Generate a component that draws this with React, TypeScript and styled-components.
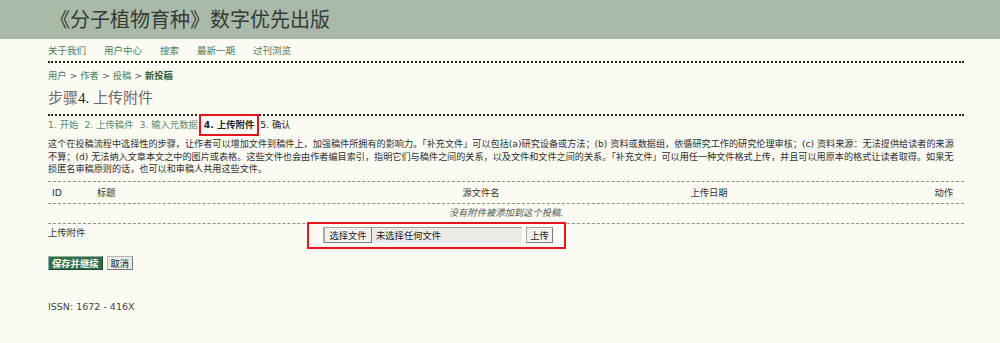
import React from 'react'
import styled, { createGlobalStyle } from 'styled-components'

const GlobalStyle = createGlobalStyle`
  body {
    margin: 0;
    background: #fbfbf4;
    color: #333;
    font-family: 'DejaVu Sans', 'Noto Sans CJK SC', sans-serif;
  }
`

const Header = styled.header`
  height: 39px;
  background: #aabaa8;
  display: flex;
  align-items: center;
  padding-left: 50px;
`

const Title = styled.h1`
  margin: 0;
  font: 400 20px/1 'Liberation Serif', 'Noto Sans CJK SC', serif;
  color: #363a36;
`

const Main = styled.main`
  width: 916px;
  margin-left: 48px;
`

const Nav = styled.nav`
  display: flex;
  gap: 18px;
  padding: 6px 0 4px;
  border-bottom: 2px dotted #222;
  font-size: 9.5px;
  line-height: 12px;
`

const GreenLink = styled.a<{ $strong?: boolean }>`
  color: ${(p) => (p.$strong ? '#2f5e40' : '#4b7d5b')};
  font-weight: ${(p) => (p.$strong ? 700 : 400)};
  text-decoration: none;
`

const Crumbs = styled.div`
  margin-top: 7px;
  font-size: 9.3px;
  line-height: 12px;
  color: #555;
`

const Heading = styled.h2`
  margin: 7px 0 0;
  padding-bottom: 7px;
  border-bottom: 2px dotted #222;
  font: 400 15px/18px 'Liberation Serif', 'Noto Sans CJK SC', serif;
  color: #6a6a6a;

  b {
    font-weight: 400;
    color: #1b2740;
  }
`

const Steps = styled.div`
  margin-top: 3px;
  display: flex;
  gap: 6px;
  font-size: 9.3px;
  line-height: 12px;
`

const Step = styled.span<{ $state: 'done' | 'current' | 'todo' }>`
  color: ${(p) => (p.$state === 'done' ? '#5a8a69' : '#222')};
  font-weight: ${(p) => (p.$state === 'current' ? 700 : 400)};
  outline: ${(p) => (p.$state === 'current' ? '2px solid #e8141c' : 'none')};
  outline-offset: 3px;
`

const Intro = styled.p`
  margin: 7px 0 0;
  font-size: 9.15px;
  line-height: 12.5px;
  white-space: nowrap;
  color: #2e2e2e;
`

const Table = styled.div`
  margin-top: 5px;
  border-top: 1px dashed #8f8f8f;
  font-size: 9.3px;
`

const HeadRow = styled.div`
  display: grid;
  grid-template-columns: 45px 238px 300px 156px 1fr;
  align-items: center;
  height: 21px;
  border-bottom: 1px dashed #8f8f8f;
  color: #333;
`

const Cell = styled.span<{ $align?: 'left' | 'center' | 'right' }>`
  text-align: ${(p) => p.$align ?? 'left'};
  padding: ${(p) => (p.$align === 'right' ? '0 11px 0 0' : p.$align === 'center' ? '0' : '0 0 0 4px')};
`

const EmptyRow = styled.div`
  height: 19px;
  line-height: 18px;
  text-align: center;
  font-style: italic;
  color: #555;
  border-bottom: 1px dashed #8f8f8f;
`

const UploadRow = styled.div`
  display: grid;
  grid-template-columns: 259px 1fr;
  height: 25px;
`

const Label = styled.span`
  padding-top: 3px;
  line-height: 12px;
`

const Frame = styled.div`
  justify-self: start;
  display: inline-flex;
  align-items: center;
  gap: 4px;
  margin-top: -2px;
  padding: 3px 11px 4px 14px;
  border: 2px solid #e8141c;
`

const FileBox = styled.div`
  display: flex;
  align-items: center;
  width: 199px;
  height: 16px;
  box-sizing: border-box;
  background: #ebebe7;
  border-top: 1px solid #9a9a9a;
  border-left: 1px solid #b0b0b0;
  color: #222;
`

const Btn = styled.span<{ $w: number }>`
  display: inline-flex;
  align-items: center;
  justify-content: center;
  box-sizing: border-box;
  width: ${(p) => p.$w}px;
  height: 16px;
  background: #f1f1ef;
  border: 1px solid #a5a5a5;
  border-right-color: #7d7d7d;
  border-bottom-color: #7d7d7d;
  color: #222;
  font-size: 9.3px;
`

const FileName = styled.span`
  padding-left: 4px;
`

const Actions = styled.div`
  margin-top: 7px;
  display: flex;
  gap: 4px;
`

const SubmitBtn = styled.span<{ $primary?: boolean }>`
  display: inline-flex;
  align-items: center;
  justify-content: center;
  box-sizing: border-box;
  height: 14px;
  padding: 0 3px;
  font-size: 9.3px;
  font-weight: ${(p) => (p.$primary ? 700 : 400)};
  color: ${(p) => (p.$primary ? '#fff' : '#222')};
  background: ${(p) => (p.$primary ? '#2f6f4e' : '#e9e9e6')};
  border: 1px solid ${(p) => (p.$primary ? '#8fb09c' : '#b5b5b5')};
  border-right-color: ${(p) => (p.$primary ? '#1c4a32' : '#777')};
  border-bottom-color: ${(p) => (p.$primary ? '#1c4a32' : '#777')};
`

const Issn = styled.div`
  margin-top: 31px;
  font-size: 9.5px;
  line-height: 12px;
  color: #444;
`

const navItems = ['关于我们', '用户中心', '搜索', '最新一期', '过刊浏览']

const App: React.FC = () => {
  return (
    <>
      <GlobalStyle />
      <Header>
        <Title>《分子植物育种》数字优先出版</Title>
      </Header>
      <Main>
        <Nav>
          {navItems.map((n) => (
            <GreenLink key={n} href="#">
              {n}
            </GreenLink>
          ))}
        </Nav>
        <Crumbs>
          <GreenLink href="#">用户</GreenLink> &gt; <GreenLink href="#">作者</GreenLink> &gt;{' '}
          <GreenLink href="#">投稿</GreenLink> &gt; <GreenLink $strong href="#">新投稿</GreenLink>
        </Crumbs>
        <Heading>
          步骤<b>4.</b> 上传附件
        </Heading>
        <Steps>
          <Step $state="done">1. 开始</Step>
          <Step $state="done">2. 上传稿件</Step>
          <Step $state="done">3. 输入元数据</Step>
          <Step $state="current">4. 上传附件</Step>
          <Step $state="todo">5. 确认</Step>
        </Steps>
        <Intro>
          这个在投稿流程中选择性的步骤，让作者可以增加文件到稿件上，加强稿件所拥有的影响力。「补充文件」可以包括(a)研究设备或方法；(b) 资料或数据组，依循研究工作的研究伦理审核；(c) 资料来源：无法提供给读者的来源
          <br />
          不算；(d) 无法纳入文章本文之中的图片或表格。这些文件也会由作者编目索引，指明它们与稿件之间的关系，以及文件和文件之间的关系。「补充文件」可以用任一种文件格式上传，并且可以用原本的格式让读者取得。如果无
          <br />
          损匿名审稿原则的话，也可以和审稿人共用这些文件。
        </Intro>
        <Table>
          <HeadRow>
            <Cell>ID</Cell>
            <Cell>标题</Cell>
            <Cell $align="center">源文件名</Cell>
            <Cell $align="center">上传日期</Cell>
            <Cell $align="right">动作</Cell>
          </HeadRow>
          <EmptyRow>没有附件被添加到这个投稿.</EmptyRow>
          <UploadRow>
            <Label>上传附件</Label>
            <Frame>
              <FileBox>
                <Btn $w={48}>选择文件</Btn>
                <FileName>未选择任何文件</FileName>
              </FileBox>
              <Btn $w={27}>上传</Btn>
            </Frame>
          </UploadRow>
        </Table>
        <Actions>
          <SubmitBtn $primary>保存并继续</SubmitBtn>
          <SubmitBtn>取消</SubmitBtn>
        </Actions>
        <Issn>ISSN: 1672 - 416X</Issn>
      </Main>
    </>
  )
}

export default App
